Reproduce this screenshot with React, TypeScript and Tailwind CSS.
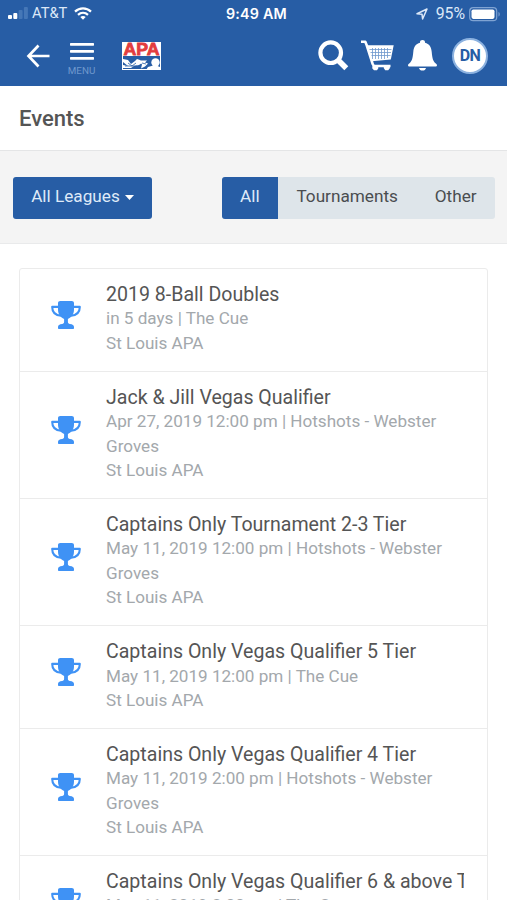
import { clsx } from 'clsx';

const events = [
  { title: '2019 8-Ball Doubles', when: 'in 5 days', place: 'The Cue' },
  { title: 'Jack & Jill Vegas Qualifier', when: 'Apr 27, 2019 12:00 pm', place: 'Hotshots - Webster Groves' },
  { title: 'Captains Only Tournament 2-3 Tier', when: 'May 11, 2019 12:00 pm', place: 'Hotshots - Webster Groves' },
  { title: 'Captains Only Vegas Qualifier 5 Tier', when: 'May 11, 2019 12:00 pm', place: 'The Cue' },
  { title: 'Captains Only Vegas Qualifier 4 Tier', when: 'May 11, 2019 2:00 pm', place: 'Hotshots - Webster Groves' },
  { title: 'Captains Only Vegas Qualifier 6 & above Tier', when: 'May 11, 2019 2:00 pm', place: 'The Cue' },
];

const filters = ['All', 'Tournaments', 'Other'];

function Trophy() {
  return (
    <svg width="30" height="28" viewBox="0 0 30 28" fill="none" className="block shrink-0">
      <path d="M8 5.900H1.200c0 5.500 3.600 8.300 8.800 8.900M22 5.900h6.800c0 5.500-3.600 8.300-8.800 8.900" stroke="#3f92f5" strokeWidth="2.100" strokeLinejoin="round" />
      <path
        d="M9.300 0h11.400c1.400 0 2.300.8 2.300 2.200v6.300c0 4.800-2.600 7.900-6.100 9.500v3.100c0 1.200.7 1.700 2 1.900 2.600.3 4.100 1.100 4.100 2.900v1.300c0 .5-.3.800-.8.800H7.800c-.5 0-.8-.3-.8-.8v-1.300c0-1.800 1.500-2.600 4.100-2.900 1.300-.2 2-.7 2-1.900V18C9.600 16.400 7 13.300 7 8.500V2.200C7 .8 7.900 0 9.300 0z"
        fill="#3f92f5"
      />
    </svg>
  );
}

function StatusBar() {
  return (
    <div className="grid h-[27px] grid-cols-3 items-center pl-2 pr-[6px] text-[14.7px] text-[#dce8f8]">
      <div className="flex items-center">
        <svg width="20" height="13" viewBox="0 0 20 13">
          <rect x="0" y="8" width="4" height="4" rx="1" fill="#fff" />
          <rect x="5.300" y="6" width="4" height="6" rx="1" fill="#fff" />
          <rect x="10.600" y="3" width="4" height="9" rx="1" fill="#4577b7" />
          <rect x="15.900" y="0" width="4" height="12" rx="1" fill="#4577b7" />
        </svg>
        <span className="ml-[4px] w-[36px] whitespace-nowrap text-[14.700px]">AT&amp;T</span>
        <svg width="18" height="13" viewBox="0 0 18 13" fill="none" stroke="#fff" className="ml-[6px]">
          <path d="M1 4.600C5.500.3 12.500.3 17 4.600" strokeWidth="2.200" />
          <path d="M4 7.900c2.900-2.700 7.100-2.700 10 0" strokeWidth="2.200" />
          <path d="M9 12.700l-2.700-2.800c1.500-1.300 3.900-1.300 5.400 0z" fill="#fff" stroke="none" />
        </svg>
      </div>
      <div className="pl-[4px] text-center font-['Inter',sans-serif] text-[14.300px] font-semibold tracking-[0.2px] text-white">
        9:49 AM
      </div>
      <div className="flex items-center justify-end pt-px">
        <svg width="12" height="12" viewBox="0 0 12 12" fill="none" stroke="#dce8f8" strokeWidth="1.500" strokeLinejoin="round" className="mb-px">
          <path d="M1 5.700L11 1 6.600 11 6 6.200z" />
        </svg>
        <span className="ml-[8px] text-[15.800px]">95%</span>
        <svg width="32" height="15" viewBox="0 0 32 15" className="ml-[4px]">
          <rect x=".7" y=".7" width="27" height="13" rx="3.500" fill="none" stroke="#7fa3d3" strokeWidth="1.200" />
          <rect x="2.500" y="2.500" width="23" height="9.400" rx="1.800" fill="#fff" />
          <path d="M29.500 5c1.600.5 1.600 4 0 4.500z" fill="#7fa3d3" />
        </svg>
      </div>
    </div>
  );
}

function ApaLogo() {
  return (
    <svg width="39" height="28" viewBox="0 0 39 28" className="block">
      <rect width="39" height="28" fill="#fff" />
      <text x="1.500" y="12.700" textLength="36" lengthAdjust="spacingAndGlyphs" fontFamily="Liberation Sans, sans-serif" fontWeight="900" fontSize="16.300" fill="#e23c3e" stroke="#e23c3e" strokeWidth=".8">
        APA
      </text>
      <rect x="1" y="14" width="37" height="13" fill="#275da5" />
      <path d="M1 17l5 1 3 4 4-3 2-2 3 1 2 3-3 2-5 1-3 2H1v-3l5 1-5-4z" fill="#fff" />
      <path d="M17 18.500h8l-2 2 3 1-3 3-4 2 1-4z" fill="#fff" />
      <path d="M6 21l4 3 4-3M3 24h12M20 21l4 1" stroke="#275da5" strokeWidth=".8" fill="none" />
      <circle cx="33.500" cy="20.500" r="4.200" fill="#fff" />
      <path d="M26 25l7-2 5 2v3H24z" fill="#fff" />
    </svg>
  );
}

function NavBar() {
  return (
    <div className="flex h-[59px] items-center pl-[26px] pr-[19px]">
      <svg width="24" height="24" viewBox="0 0 24 24" fill="none" stroke="#fff" strokeWidth="2.700" className="mb-[2px]">
        <path d="M12.500 1.500L2.500 12l10 10.500M2.500 12H23.500" />
      </svg>
      <div className="ml-[17px] mt-[5px] flex w-[29px] flex-col items-center">
        <svg width="24" height="17" viewBox="0 0 24 17" fill="#fff">
          <rect width="24" height="2.700" rx=".6" />
          <rect y="7" width="24" height="2.700" rx=".6" />
          <rect y="14" width="24" height="2.700" rx=".6" />
        </svg>
        <span className="mt-[5px] text-[9.800px] leading-[11px] text-[#6f98cd]">MENU</span>
      </div>
      <div className="mb-[2px] ml-[26px]">
        <ApaLogo />
      </div>
      <div className="mb-[2px] ml-auto flex items-center">
        <svg width="31" height="31" viewBox="0 0 31 31" fill="none" stroke="#fff" className="mr-[2px]">
          <circle cx="12.700" cy="12.700" r="10.300" strokeWidth="4.200" />
          <path d="M20 20l8.300 8.300" strokeWidth="5.600" />
        </svg>
        <svg width="33" height="31" viewBox="0 0 33 31" className="ml-[10px]" fill="none" stroke="#fff">
          <path d="M0 1.800h4.300l1.500 3.700 5.900 18.700q.6 1.800 2.300 1.800h15.500" strokeWidth="2.600" strokeLinejoin="round" />
          <path d="M5.700 5.300h27L29.800 19.500l-19.200 1.800z" fill="#fff" stroke="none" />
          <path d="M8.500 9.500h22M9.500 12.500h20.500M10.500 15.500h19M11.500 8v11M14.500 8v11M17.500 8v11M20.500 8v11M23.500 8v11M26.500 8v10" stroke="#6f98cd" strokeWidth=".8" />
          <path d="M11.500 26h5l1 2-1.500 2.300h-3l-1.800-2zM23 26h5.500l.5 2-1.800 2.300h-3l-1.500-2.300z" fill="#fff" stroke="none" />
        </svg>
        <svg width="29" height="31" viewBox="0 0 29 31" fill="#fff" className="ml-[14px]">
          <path d="M14.500 0c1.500 0 2.500.9 2.500 2.200v.6c4.300 1 6.200 4.300 6.700 8.900.6 7.200 1.500 9.400 3.800 11.500.9.7 1.500 1.400 1.500 2.200-.3 1-1 1.100-2 1.100H2c-1 0-1.700-.1-2-1.100 0-.8.6-1.500 1.500-2.200 2.300-2.100 3.200-4.300 3.800-11.500.5-4.600 2.400-7.900 6.700-8.900v-.6C12 .9 13 0 14.500 0z" />
          <path d="M11 28h7c-.3 1.700-1.700 2.600-3.500 2.600s-3.200-.9-3.500-2.600z" />
        </svg>
        <div className="ml-[15px] flex h-[36px] w-[36px] items-center justify-center rounded-full border-2 border-[#8cb2e0] bg-white text-[16px] font-bold tracking-[-0.500px] text-[#275da5]">
          DN
        </div>
      </div>
    </div>
  );
}

export default function App() {
  return (
    <div className="h-[900px] w-[507px] overflow-hidden bg-white font-['Roboto',sans-serif]">
      <header className="h-[86px] bg-[#275da5]">
        <StatusBar />
        <NavBar />
      </header>

      <div className="flex h-[65px] items-center border-b border-[#e4e5e6] pl-[19px]">
        <h1 className="text-[22px] font-medium text-[#555]">Events</h1>
      </div>

      {/* Filters */}
      <div className="flex h-[93px] items-center justify-between border-b border-[#e9eaeb] bg-[#f4f4f4] pl-[13px] pr-[12px] pt-[2px] text-[17.200px]">
        <button className="flex h-[42px] w-[139px] items-center justify-center gap-[5px] rounded-[3px] bg-[#275da5] pb-[2px] text-[#dfeaf8]">
          All Leagues
          <svg width="9" height="5" viewBox="0 0 9 5" fill="#fff" className="mt-px">
            <path d="M0 0h9L4.500 5z" />
          </svg>
        </button>
        <div className="flex h-[42px] overflow-hidden rounded-[3px] bg-[#dee5ea]">
          {filters.map((name, i) => (
            <button
              key={name}
              className={clsx('px-[18.400px] pb-[2px]', i === 0 ? 'bg-[#275da5] text-[#dfeaf8]' : 'text-[#4a4d50]')}
            >
              {name}
            </button>
          ))}
        </div>
      </div>

      {/* Event list */}
      <div className="mx-[19px] mt-[24px] rounded-[3px] border border-[#ebebeb]">
        {events.map((event) => (
          <div
            key={event.title}
            className="flex items-center border-b border-[#ebebeb] pb-[15.400px] pl-[31px] pr-[23px] pt-[14.200px]"
          >
            <div className="mt-[-8px] shrink-0">
              <Trophy />
            </div>
            <div className="ml-[25px] min-w-0 flex-1 leading-[24.450px]">
              <div className="overflow-hidden whitespace-nowrap text-[19.570px] leading-[23.250px] text-[#555]">{event.title}</div>
              <div className="text-[17.100px] text-[#a3a8ac]">{`${event.when} | ${event.place}`}</div>
              <div className="text-[17.100px] text-[#a3a8ac]">St Louis APA</div>
            </div>
          </div>
        ))}
      </div>
    </div>
  );
}
